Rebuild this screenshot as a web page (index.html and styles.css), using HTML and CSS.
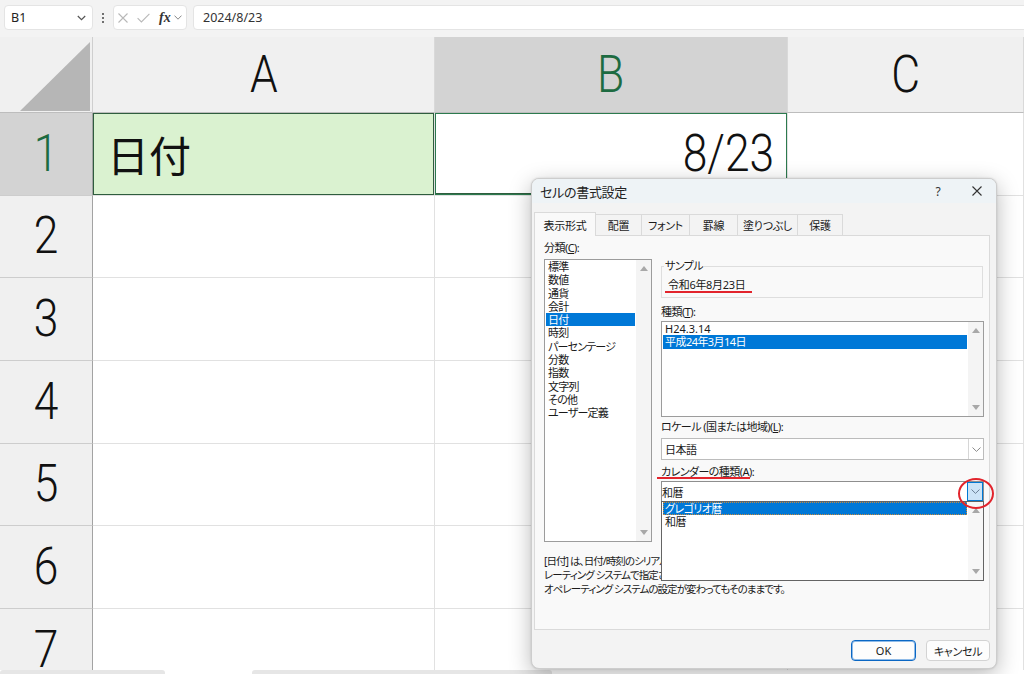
FILE: index.html
```html
<!DOCTYPE html>
<html lang="ja">
<head>
<meta charset="utf-8">
<title>セルの書式設定</title>
<link rel="stylesheet" href="styles.css">
</head>
<body>
<div class="app">
  <div class="topbar">
    <div class="namebox">
      <span>B1</span>
      <svg width="9" height="6" viewBox="0 0 9 6"><path d="M.8 1 4.5 4.7 8.2 1" fill="none" stroke="#555" stroke-width="1.2"/></svg>
    </div>
    <div class="kebab"><i></i><i></i><i></i></div>
    <div class="fxbox">
      <svg class="ic-x" width="10" height="10" viewBox="0 0 10 10"><path d="M.5.5 9.5 9.5M9.5.5.5 9.5" stroke="#b8b8b8" stroke-width="1.1"/></svg>
      <svg class="ic-ok" width="13" height="10" viewBox="0 0 13 10"><path d="M.6 5.2 4.4 9 12.4.8" fill="none" stroke="#b8b8b8" stroke-width="1.1"/></svg>
      <span class="fx">fx</span>
      <svg class="ic-dd" width="8" height="5" viewBox="0 0 8 5"><path d="M.5.6 4 4.2 7.5.6" fill="none" stroke="#888" stroke-width="1"/></svg>
    </div>
    <div class="formula">2024/8/23</div>
  </div>

  <div class="sheet">
    <div class="corner"><svg width="92" height="75" viewBox="0 0 92 75"><polygon points="20,74 90,74 90,5" fill="#b6b6b6"/></svg></div>
    <div class="ch"><span class="big">A</span></div>
    <div class="ch sel"><span class="big">B</span></div>
    <div class="ch"><span class="big">C</span></div>

    <div class="rh sel"><span class="big">1</span></div>
    <div class="c a1">日付</div>
    <div class="c b1"><span class="big num">8/23</span></div>
    <div class="c"></div>

    <div class="rh"><span class="big">2</span></div><div class="c"></div><div class="c"></div><div class="c"></div>
    <div class="rh"><span class="big">3</span></div><div class="c"></div><div class="c"></div><div class="c"></div>
    <div class="rh"><span class="big">4</span></div><div class="c"></div><div class="c"></div><div class="c"></div>
    <div class="rh"><span class="big">5</span></div><div class="c"></div><div class="c"></div><div class="c"></div>
    <div class="rh"><span class="big">6</span></div><div class="c"></div><div class="c"></div><div class="c"></div>
    <div class="rh"><span class="big">7</span></div><div class="c"></div><div class="c"></div><div class="c"></div>
  </div>

  <div class="bottombar"><span class="pill p1"></span><span class="pill p2"></span></div>
</div>

<div class="dialog">
  <div class="titlebar">
    <span class="title">セルの書式設定</span>
    <span class="help">?</span>
    <span class="close"><svg width="10" height="10" viewBox="0 0 10 10"><path d="M.5.5 9.5 9.5M9.5.5.5 9.5" stroke="#333" stroke-width="1.1"/></svg></span>
  </div>
  <div class="tabs">
    <div class="tab active w62">表示形式</div>
    <div class="tab w46">配置</div>
    <div class="tab w48">フォント</div>
    <div class="tab w48">罫線</div>
    <div class="tab w60">塗りつぶし</div>
    <div class="tab w45">保護</div>
  </div>
  <div class="panel">
    <div class="cols">
      <div class="leftcol">
        <div class="label">分類(<u>C</u>):</div>
        <div class="listbox cat">
          <ul class="items">
            <li>標準</li>
            <li>数値</li>
            <li>通貨</li>
            <li>会計</li>
            <li class="on">日付</li>
            <li>時刻</li>
            <li>パーセンテージ</li>
            <li>分数</li>
            <li>指数</li>
            <li>文字列</li>
            <li>その他</li>
            <li>ユーザー定義</li>
          </ul>
          <div class="vscroll">
            <svg width="8" height="5" viewBox="0 0 8 5"><path d="M0 5 4 0 8 5Z" fill="#a8a8a8"/></svg>
            <svg width="8" height="5" viewBox="0 0 8 5"><path d="M0 0 4 5 8 0Z" fill="#a8a8a8"/></svg>
          </div>
        </div>
      </div>
      <div class="rightcol">
        <fieldset class="sample">
          <legend>サンプル</legend>
          <div class="sample-val">令和6年8月23日</div>
        </fieldset>
        <div class="label gap7">種類(<u>T</u>):</div>
        <div class="listbox types">
          <ul class="items">
            <li class="latin">H24.3.14</li>
            <li class="on">平成24年3月14日</li>
          </ul>
          <div class="vscroll">
            <svg width="8" height="5" viewBox="0 0 8 5"><path d="M0 5 4 0 8 5Z" fill="#a8a8a8"/></svg>
            <svg width="8" height="5" viewBox="0 0 8 5"><path d="M0 0 4 5 8 0Z" fill="#a8a8a8"/></svg>
          </div>
        </div>
        <div class="label gap3">ロケール (国または地域)(<u>L</u>):</div>
        <div class="combo locale">
          <span class="val">日本語</span>
          <span class="dd"><svg width="9" height="5" viewBox="0 0 9 5"><path d="M.5.5 4.5 4.4 8.5.5" fill="none" stroke="#8a8a8a"/></svg></span>
        </div>
        <div class="label gap5">カレンダーの種類(<u>A</u>):</div>
        <div class="combo cal">
          <span class="val">和暦</span>
          <span class="dd hot"><svg width="9" height="5" viewBox="0 0 9 5"><path d="M.5.5 4.5 4.4 8.5.5" fill="none" stroke="#6a7f95"/></svg></span>
          <div class="droplist">
            <ul class="items">
              <li class="on focus">グレゴリオ暦</li>
              <li>和暦</li>
            </ul>
            <div class="vscroll">
              <svg width="8" height="5" viewBox="0 0 8 5"><path d="M0 5 4 0 8 5Z" fill="#a8a8a8"/></svg>
              <svg width="8" height="5" viewBox="0 0 8 5"><path d="M0 0 4 5 8 0Z" fill="#a8a8a8"/></svg>
            </div>
          </div>
        </div>
      </div>
    </div>
    <p class="desc">[日付] は、日付/時刻のシリアル値を日付形式で表示します。* で始まる形式は、オペ<br>レーティング システムで指定された地域の設定に従って変わります。* のない形式は、<br>オペレーティング システムの設定が変わってもそのままです。</p>
  </div>
  <div class="buttons">
    <button class="btn ok">OK</button>
    <button class="btn">キャンセル</button>
  </div>

  <span class="mark ul1"></span>
  <span class="mark ul2"></span>
  <span class="mark circle"></span>
</div>
</body>
</html>
```
FILE: styles.css
```css
* { box-sizing: border-box; margin: 0; padding: 0; }
html, body { width: 1024px; height: 674px; overflow: hidden; }
body {
  position: relative;
  background: #fff;
  font-family: "Noto Sans", "Noto Sans CJK JP", sans-serif;
  color: #1f1f1f;
}
.app { display: flex; flex-direction: column; height: 674px; }

/* ---------- formula bar ---------- */
.topbar {
  flex: none;
  height: 37px;
  background: #f3f3f3;
  display: flex;
  align-items: flex-start;
  padding: 5px 0 0 4px;
}
.namebox {
  width: 89px; height: 25px;
  background: #fff;
  border: 1px solid #e4e4e4;
  border-radius: 4px;
  display: flex; align-items: center; justify-content: space-between;
  padding: 0 6px 0 6px;
  font-size: 12.5px; color: #222;
}
.kebab {
  width: 4px; height: 25px;
  margin: 0 8px 0 8px;
  display: flex; flex-direction: column; justify-content: center; align-items: center; gap: 2px;
}
.kebab i { width: 2px; height: 2px; background: #444; border-radius: 1px; }
.fxbox {
  width: 74px; height: 25px;
  background: #fff;
  border: 1px solid #e4e4e4;
  border-radius: 4px;
  display: flex; align-items: center;
  padding-left: 4px;
}
.ic-ok { margin-left: 9px; }
.fx {
  margin-left: 9px;
  font-family: "Liberation Serif", serif;
  font-style: italic; font-weight: bold;
  font-size: 14px; color: #333;
  line-height: 1;
}
.ic-dd { margin-left: 3px; }
.formula {
  flex: 1;
  height: 25px;
  margin: 0 -8px 0 6px;
  background: #fff;
  border: 1px solid #e4e4e4;
  border-radius: 4px;
  padding-left: 9px;
  font-size: 12.5px; color: #333;
  line-height: 23px;
}

/* ---------- sheet ---------- */
.sheet {
  flex: 1 1 0;
  min-height: 0;
  overflow: hidden;
  display: grid;
  grid-template-columns: 93px 342px 353px 236px;
  grid-template-rows: 76px repeat(7, 82.67px);
}
.corner {
  background: #f0f0f0;
  border-right: 1px solid #cfcfcf;
  border-bottom: 1px solid #bdbdbd;
}
.corner svg { display: block; }
.ch {
  background: #f0f0f0;
  border-right: 1px solid #d9d9d9;
  border-bottom: 1px solid #bdbdbd;
  display: flex; align-items: center; justify-content: center;
  color: #111;
}
.rh {
  background: #f0f0f0;
  border-right: 1px solid #a3a3a3;
  border-bottom: 1px solid #cdcdcd;
  display: flex; align-items: center; justify-content: center;
  color: #111;
}
.sel { background: #d3d3d3; color: #1d6b41; }
.c {
  border-right: 1px solid #e1e1e1;
  border-bottom: 1px solid #e1e1e1;
}
.big {
  display: inline-block;
  font-family: Roboto, "Noto Sans", sans-serif;
  font-weight: 300;
  font-size: 51px;
  line-height: 36px;
  transform: scaleX(0.87);
}
.a1 {
  background: #daf2d0;
  box-shadow: inset 0 0 0 1px #2f5d3e;
  display: flex; align-items: center;
  padding-left: 14px;
  font-family: "Noto Sans CJK JP", sans-serif;
  font-size: 42px;
  color: #111;
}
.b1 {
  box-shadow: inset 0 0 0 1px #2c7a4e, inset 0 -1px 0 1px #2f5d3e;
  display: flex; align-items: center; justify-content: flex-end;
  padding-right: 13px;
  color: #111;
}
.big.num { transform-origin: right center; }

.bottombar { flex: none; height: 4px; display: flex; background: #fff; }
.pill { height: 4px; background: #e6e6e6; border-radius: 3px 3px 0 0; }
.p1 { width: 165px; }
.p2 { width: 300px; margin-left: 87px; }

/* ---------- dialog ---------- */
.dialog {
  position: absolute;
  left: 531px; top: 178px;
  width: 466px; height: 491px;
  background: #f3f3f3;
  border: 1px solid #cdcdcd;
  border-radius: 8px;
  box-shadow: 0 6px 22px rgba(0, 0, 0, 0.28), 0 0 2px rgba(0, 0, 0, 0.15);
  display: flex; flex-direction: column;
  font-family: "Noto Sans", "Noto Sans CJK JP", sans-serif;
  font-size: 11px;
  font-feature-settings: "palt";
  letter-spacing: -0.55px;
  color: #1a1a1a;
}
.titlebar {
  flex: none;
  height: 24px;
  background: #eef3f6;
  border-radius: 7px 7px 0 0;
  display: flex; align-items: center;
  padding: 0 4px 0 8px;
  letter-spacing: -0.3px;
}
.title { font-size: 13px; color: #222; }
.help { margin-left: auto; width: 20px; text-align: center; font-size: 12px; color: #333; }
.close { width: 30px; display: flex; justify-content: center; margin-left: 14px; }

.tabs {
  flex: none;
  height: 23px;
  margin-top: 9px;
  padding-left: 2px;
  display: flex; align-items: flex-end;
  letter-spacing: -0.3px;
}
.tab {
  height: 21px;
  background: #f3f3f3;
  border: 1px solid #dadada;
  border-left: none;
  border-bottom: none;
  display: flex; align-items: center; justify-content: center;
  white-space: nowrap;
}
.tab.active {
  height: 24px;
  background: #f9f9f9;
  border-left: 1px solid #dadada;
  margin-bottom: -1px;
  position: relative; z-index: 1;
}
.w62 { width: 62px; } .w46 { width: 46px; } .w48 { width: 48px; }
.w60 { width: 60px; } .w45 { width: 45px; }

.panel {
  flex: none;
  height: 395px;
  margin: 0 6px 0 2px;
  background: #f9f9f9;
  border: 1px solid #dadada;
  padding: 5px 5px 0 9px;
  display: flex; flex-direction: column;
}
.cols { display: flex; gap: 9px; align-items: flex-start; }
.leftcol { width: 108px; flex: none; }
.rightcol { width: 323px; flex: none; }
.label { height: 14px; line-height: 14px; white-space: nowrap; }
.leftcol .label { margin-bottom: 4px; }
.gap7 { margin-top: 7px; margin-bottom: 2px; }
.gap3 { margin-top: 3px; margin-bottom: 4px; }
.gap5 { margin-top: 5px; margin-bottom: 2px; }

.listbox {
  background: #fff;
  border: 1px solid #9c9c9c;
  display: flex;
}
.cat { height: 283px; }
.cat .items { letter-spacing: -0.8px; }
.types { height: 96px; }
.items { flex: 1; list-style: none; padding: 0 1px; min-width: 0; }
.items li {
  height: 13.3px; line-height: 13.3px;
  padding-left: 2px;
  white-space: nowrap; overflow: hidden;
}
.items li.latin { letter-spacing: 0; }
.items li.on { background: #0078d7; color: #fff; }
.vscroll {
  width: 15px; flex: none;
  background: #f4f4f4;
  display: flex; flex-direction: column; justify-content: space-between; align-items: center;
  padding: 6px 0 6px;
}
.vscroll svg { display: block; }

.sample {
  margin-top: 18px;
  width: 322px; height: 39px;
  border: 1px solid #dedede;
  padding: 5px 0 0 2px;
  min-inline-size: 0;
}
.sample legend { padding: 0 1px; line-height: 14px; font-size: 11px; }
.sample-val { margin-left: 4px; line-height: 14px; letter-spacing: -0.3px; }

.combo {
  position: relative;
  background: #fff;
  border: 1px solid #bcbcbc;
  display: flex; align-items: center;
}
.locale { height: 22px; }
.cal { height: 21px; border-color: #8e8e8e; }
.combo .val { flex: 1; padding-left: 3px; }
.cal .val { padding-left: 0; }
.combo .dd {
  width: 15px; height: 100%;
  border-left: 1px solid #d6d6d6;
  display: flex; align-items: center; justify-content: center;
}
.combo .dd.hot {
  width: 16px; height: 19px;
  background: #cce4f7;
  border: 1px solid #0078d4;
}
.droplist {
  position: absolute;
  left: -1px; top: 100%;
  width: 323px; height: 80px;
  background: #fff;
  border: 1px solid #646464;
  display: flex;
  z-index: 3;
}
.droplist .items li { height: 13px; line-height: 13px; }
.droplist .items li.focus { outline: 1px dotted #c98a3a; outline-offset: -1px; }
.droplist .vscroll { background: #f7f7f7; }

.desc {
  margin-top: 12px;
  font-size: 10.5px;
  letter-spacing: -0.95px;
  line-height: 14px;
  white-space: nowrap;
}

.buttons {
  flex: none;
  margin-top: 10px;
  padding-right: 6px;
  display: flex; justify-content: flex-end; gap: 10px;
}
.btn {
  width: 64px; height: 21px;
  background: #fdfdfd;
  border: 1px solid #d3d3d3;
  border-radius: 4px;
  font-family: inherit; font-size: 11px; font-feature-settings: "palt";
  letter-spacing: -0.3px;
  color: #1a1a1a;
}
.btn.ok { width: 65px; border: 1px solid #0a67c4; box-shadow: inset 0 0 0 1px #8fbbe8; letter-spacing: 0; }

/* ---------- annotations ---------- */
.mark { position: absolute; display: block; z-index: 5; }
.ul1 { left: 133px; top: 112px; width: 87px; height: 2px; background: #e2242c; }
.ul2 { left: 125px; top: 298px; width: 93px; height: 2px; background: #e2242c; }
.circle {
  left: 426px; top: 299px;
  width: 36px; height: 31px;
  border: 2px solid #e2242c;
  border-radius: 50%;
}
```
